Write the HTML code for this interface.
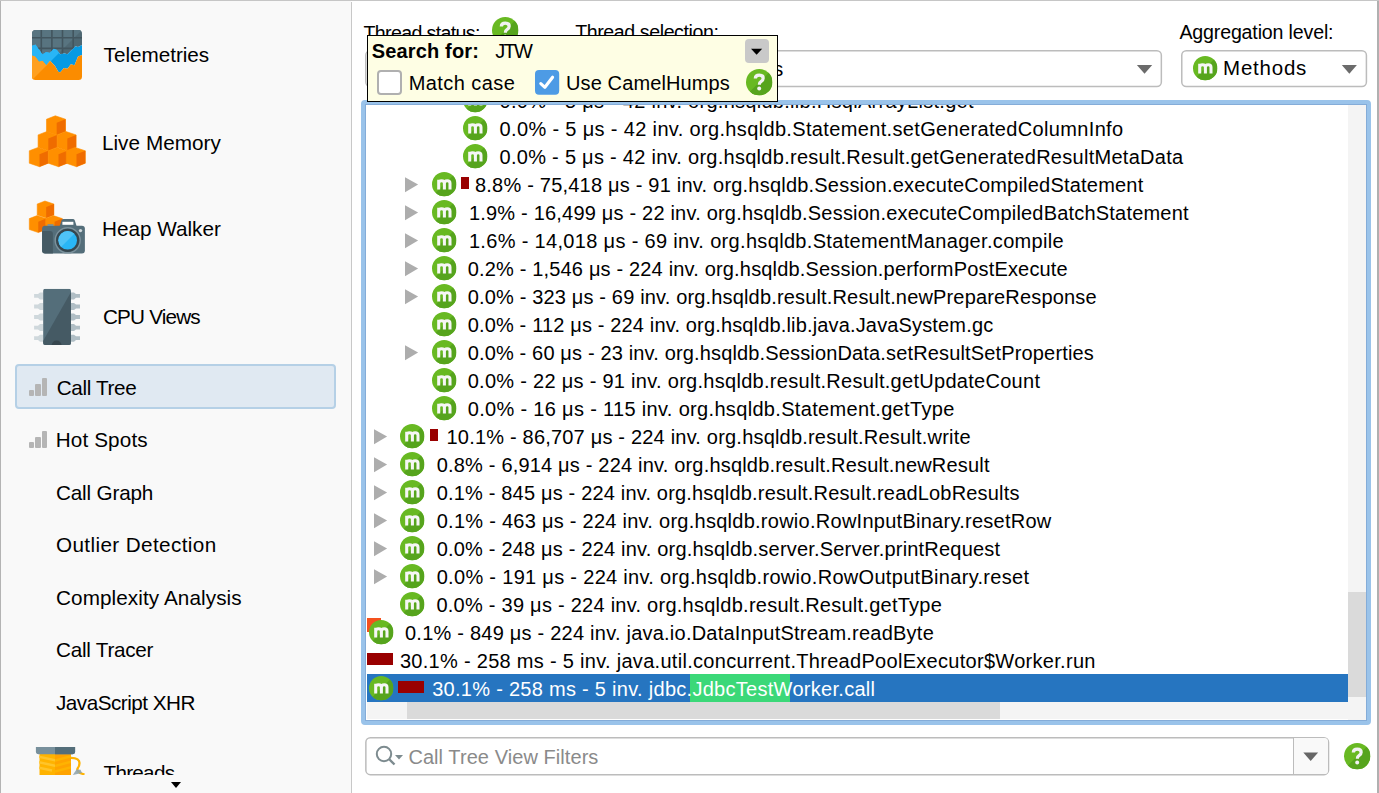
<!DOCTYPE html><html><head><meta charset="utf-8"><style>
*{margin:0;padding:0;box-sizing:border-box}
html,body{width:1379px;height:793px;overflow:hidden;background:#fff;font-family:"Liberation Sans",sans-serif;position:relative}
.a{position:absolute}
.t{position:absolute;white-space:pre}
.ic{position:absolute;overflow:visible}
.tri{position:absolute;width:0;height:0;border-top:7.8px solid transparent;border-bottom:7.8px solid transparent;border-left:13.8px solid #adadad}
.bar{position:absolute;background:#990000}
</style></head><body>
<svg width="0" height="0" style="position:absolute">
<defs>
<clipPath id="cc"><circle cx="12" cy="12" r="12"/></clipPath>
<clipPath id="cc2"><circle cx="13" cy="13" r="13"/></clipPath>
<symbol id="mi" viewBox="0 0 24 24"><g clip-path="url(#cc)"><rect width="24" height="24" fill="#68b922"/><path d="M24 0L24 24L0 24Z" fill="#56a41d"/></g><path d="M6.6 17.2V7.6M6.6 11Q6.6 8.6 9.4 8.6Q12.2 8.6 12.2 11V17.2M12.2 11Q12.2 8.6 15 8.6Q17.7 8.6 17.7 11V17.2" stroke="#f6f6f6" stroke-width="3" fill="none"/></symbol>
<symbol id="hi" viewBox="0 0 26 26"><g clip-path="url(#cc2)"><rect width="26" height="26" fill="#68b922"/><path d="M26 0L26 26L0 26Z" fill="#56a41d"/></g><path d="M9.2 9.4Q9.2 6 13.1 6Q16.9 6 16.9 9.1Q16.9 10.9 15 12.1Q13.1 13.3 13.1 15.4" stroke="#f2f2f2" stroke-width="3.2" fill="none"/><circle cx="13" cy="19.3" r="1.95" fill="#f2f2f2"/></symbol>
</defs></svg>

<div class="a" style="left:0;top:0;width:1379px;height:1px;background:#c6c6c6"></div>
<div class="a" style="left:0;top:1px;width:1px;height:792px;background:#b4b4b4"></div>
<div class="a" style="left:1px;top:1px;width:350px;height:792px;background:#f9f9f9"></div>
<div class="a" style="left:351px;top:2px;width:1px;height:791px;background:#c8c8c8"></div>
<div class="a" style="left:1377px;top:1px;width:2px;height:792px;background:#b0b0b0"></div>
<svg class="ic" style="left:32px;top:30px;width:50px;height:50px" viewBox="0 0 50 50">
<defs><clipPath id="tc"><rect x="0" y="0" width="50" height="50" rx="3.5"/></clipPath><clipPath id="tul"><path d="M0 0H50L0 50Z"/></clipPath><clipPath id="tsl"><path d="M0 0L50 0L50 14.9L46 17L43.4 16.2L35.4 24.2L31.9 23.3L28.3 24.2L24.8 19.7L21.7 18.4L17.7 22.8L14.2 22L10.6 24.2L3.5 14.4L0 15.8Z"/></clipPath></defs>
<g clip-path="url(#tc)">
<path d="M0 0L50 0L50 14.9L46 17L43.4 16.2L35.4 24.2L31.9 23.3L28.3 24.2L24.8 19.7L21.7 18.4L17.7 22.8L14.2 22L10.6 24.2L3.5 14.4L0 15.8Z" fill="#4f6873"/><path d="M0 15.8L3.5 14.4L10.6 24.2L14.2 22L17.7 22.8L21.7 18.4L24.8 19.7L28.3 24.2L31.9 23.3L35.4 24.2L43.4 16.2L46 17L50 14.9L50 25L46 26.4L42.5 35.2L38.9 34.3L35.4 38.8L31.9 37.9L28.3 42.3L26.5 41.9L23 36.1L18.1 30.8L14.2 35.2L10.6 30.8L7.1 31.7L3.1 26.4L0 25.5Z" fill="#069ae3"/><path d="M0 25.5L3.1 26.4L7.1 31.7L10.6 30.8L14.2 35.2L18.1 30.8L23 36.1L26.5 41.9L28.3 42.3L31.9 37.9L35.4 38.8L38.9 34.3L42.5 35.2L46 26.4L50 25L50 50L0 50Z" fill="#fb8c00"/>
<g clip-path="url(#tul)"><path d="M0 0L50 0L50 14.9L46 17L43.4 16.2L35.4 24.2L31.9 23.3L28.3 24.2L24.8 19.7L21.7 18.4L17.7 22.8L14.2 22L10.6 24.2L3.5 14.4L0 15.8Z" fill="#587480"/><path d="M0 15.8L3.5 14.4L10.6 24.2L14.2 22L17.7 22.8L21.7 18.4L24.8 19.7L28.3 24.2L31.9 23.3L35.4 24.2L43.4 16.2L46 17L50 14.9L50 25L46 26.4L42.5 35.2L38.9 34.3L35.4 38.8L31.9 37.9L28.3 42.3L26.5 41.9L23 36.1L18.1 30.8L14.2 35.2L10.6 30.8L7.1 31.7L3.1 26.4L0 25.5Z" fill="#29b6f6"/><path d="M0 25.5L3.1 26.4L7.1 31.7L10.6 30.8L14.2 35.2L18.1 30.8L23 36.1L26.5 41.9L28.3 42.3L31.9 37.9L35.4 38.8L38.9 34.3L42.5 35.2L46 26.4L50 25L50 50L0 50Z" fill="#ffa020"/></g>
<g clip-path="url(#tsl)"><path d="M9.3 0V50M19.9 0V50M30.5 0V50M41.2 0V50M0 7.8H50M0 18.4H50" stroke="#42555e" stroke-width="1.6"/></g>
</g></svg>
<svg class="ic" style="left:29px;top:115px;width:58px;height:53px" viewBox="29 115 58 53">
<defs><g id="cube"><path d="M0 3.4L8.8 0L19 3.4V15.8L10.2 19.3L0 15.8Z" fill="#ff8f00" stroke="#ff8f00" stroke-width="0.6" stroke-linejoin="round"/><path d="M10.2 6.9L19 3.4V15.8L10.2 19.3Z" fill="#ef6c00"/></g></defs>
<use href="#cube" x="46.5" y="115.8"/>
<use href="#cube" x="38.1" y="131.5"/>
<use href="#cube" x="57.1" y="131.5"/>
<use href="#cube" x="29.3" y="147.4"/>
<use href="#cube" x="48.3" y="147.4"/>
<use href="#cube" x="66.3" y="147.4"/>
</svg>
<svg class="ic" style="left:29px;top:200px;width:58px;height:56px" viewBox="29 200 58 56">
<g transform="translate(37.2 201) scale(0.88)"><use href="#cube"/></g>
<g transform="translate(29.3 215.6) scale(0.88)"><use href="#cube"/></g>
<g transform="translate(45.6 215.6) scale(0.88)"><use href="#cube"/></g>
<rect x="42.1" y="225.8" width="42.8" height="27.8" rx="3" fill="#546e7a"/>
<path d="M42.1 231H50Q52.9 231 52.9 234V253.6H45.1A3 3 0 0 1 42.1 250.6Z" fill="#455a64"/>
<path d="M59.7 226L61.5 220.5Q62 219.1 63.5 219.1H72.8Q74.3 219.1 74.8 220.5L76.6 226Z" fill="#546e7a"/>
<rect x="62.4" y="221.8" width="11" height="3" fill="#fff"/>
<rect x="47.5" y="224.2" width="6" height="1.8" fill="#78909c"/>
<circle cx="67.7" cy="240.3" r="12.5" fill="none" stroke="#7b919c" stroke-width="1.4"/>
<circle cx="67.7" cy="240.3" r="11.6" fill="#37474f"/>
<circle cx="67.7" cy="240.3" r="9.3" fill="#29b6f6"/>
<path d="M61.1 246.9A9.3 9.3 0 0 1 74.3 233.7Z" fill="#4fc3f7"/>
<circle cx="80.5" cy="230.6" r="1.7" fill="#cfd8dc"/>
</svg>
<svg class="ic" style="left:33px;top:288px;width:48px;height:58px" viewBox="33 288 48 58">
<g fill="#cfd8dc">
<path d="M34.1 294H38L40 292.4H43.2V299.4H40L38 297.8H34.1Z"/>
<path d="M34.1 304.6H38L40 303H43.2V310H40L38 308.4H34.1Z"/>
<path d="M34.1 315.1H38L40 313.5H43.2V320.5H40L38 318.9H34.1Z"/>
<path d="M34.1 325.7H38L40 324.1H43.2V331.1H40L38 329.5H34.1Z"/>
<path d="M34.1 336.3H38L40 334.7H43.2V341.7H40L38 340.1H34.1Z"/>
</g>
<g fill="#b0bec5">
<path d="M80 294H76L74 292.4H70.9V299.4H74L76 297.8H80Z"/>
<path d="M80 304.6H76L74 303H70.9V310H74L76 308.4H80Z"/>
<path d="M80 315.1H76L74 313.5H70.9V320.5H74L76 318.9H80Z"/>
<path d="M80 325.7H76L74 324.1H70.9V331.1H74L76 329.5H80Z"/>
<path d="M80 336.3H76L74 334.7H70.9V341.7H74L76 340.1H80Z"/>
</g>
<defs><clipPath id="chc"><rect x="43.1" y="288.8" width="27.9" height="56.1" rx="2"/></clipPath></defs>
<g clip-path="url(#chc)">
<rect x="43.1" y="288.8" width="27.9" height="56.1" fill="#546e7a"/>
<path d="M71 292L71 345L43.1 345L43.1 341Z" fill="#455a64"/>
<circle cx="56.6" cy="345.5" r="5" fill="#37474f"/>
</g>
</svg>
<div class="a" style="left:0;top:0;width:351px;height:775px;overflow:hidden">
<svg class="ic" style="left:35px;top:746px;width:52px;height:32px" viewBox="35 746 52 32">
<defs><clipPath id="spl"><rect x="39.3" y="754" width="15.7" height="24"/></clipPath><clipPath id="spr"><rect x="55" y="754" width="16.1" height="24"/></clipPath></defs>
<g clip-path="url(#spl)"><rect x="39.3" y="754" width="15.7" height="24" fill="#ffb300"/>
<path d="M38 756.5L56 760.5M38 762L56 766M38 767.5L52 770.5" stroke="#ffc42a" stroke-width="2.6"/></g>
<g clip-path="url(#spr)"><rect x="55" y="754" width="16.1" height="24" fill="#ffa300"/>
<path d="M55 760.5L72 756M55 766L72 761.5M55 771.5L72 767" stroke="#ffb300" stroke-width="2.6"/></g>
<path d="M71 757.8Q79.5 758 79.5 763Q79.5 766 77.6 768.5Q76.5 771 80 773L84.5 774.5" stroke="#ffb300" stroke-width="2.3" fill="none"/>
<path d="M72.8 775L76.5 769.5L80.5 769.8L82 773Z" fill="#90a4ae" opacity="0.9"/>
<path d="M35.9 747H75.1V751.5Q75.1 754.2 72.4 754.2H38.6Q35.9 754.2 35.9 751.5Z" fill="#78909c"/>
<path d="M55 747H75.1V751.5Q75.1 754.2 72.4 754.2H55Z" fill="#546e7a"/>
</svg>
</div>

<div class="a" style="left:15px;top:364px;width:321px;height:45px;background:#e0e9f2;border:2px solid #b5d0e6;border-radius:4px"></div>
<div class="a" style="left:28.8px;top:389.8px;width:5.5px;height:6px;background:#b5b5b5;border-radius:1px"></div><div class="a" style="left:35.4px;top:384.40000000000003px;width:5.5px;height:11.4px;background:#b5b5b5;border-radius:1px"></div><div class="a" style="left:42.1px;top:378.2px;width:5.2px;height:17.6px;background:#b5b5b5;border-radius:1px"></div>
<div class="a" style="left:28.8px;top:442.4px;width:5.5px;height:6px;background:#b5b5b5;border-radius:1px"></div><div class="a" style="left:35.4px;top:437.0px;width:5.5px;height:11.4px;background:#b5b5b5;border-radius:1px"></div><div class="a" style="left:42.1px;top:430.79999999999995px;width:5.2px;height:17.6px;background:#b5b5b5;border-radius:1px"></div>
<svg class="ic" style="left:364.5px;top:49.8px;width:200.0px;height:37.2px" viewBox="0 0 200.0 37.2"><rect x="0.75" y="0.75" width="198.50" height="35.70" rx="4.5" fill="#fff" stroke="#bcbcbc" stroke-width="1.5"/></svg>
<svg class="ic" style="left:575px;top:49.8px;width:587.2px;height:37.2px" viewBox="0 0 587.2 37.2"><rect x="0.75" y="0.75" width="585.70" height="35.70" rx="4.5" fill="#fff" stroke="#bcbcbc" stroke-width="1.5"/></svg>
<svg class="ic" style="left:1136px;top:64px;width:18px;height:11px" viewBox="0 0 18 11"><path d="M0.9 1H16.2L8.55 9.7Z" fill="#6b6b6b"/></svg>
<svg class="ic" style="left:1180.8px;top:49.8px;width:186.20000000000005px;height:37.2px" viewBox="0 0 186.20000000000005 37.2"><rect x="0.75" y="0.75" width="184.70" height="35.70" rx="4.5" fill="#fff" stroke="#bcbcbc" stroke-width="1.5"/></svg>
<svg class="ic" style="left:1341px;top:64px;width:18px;height:11px" viewBox="0 0 18 11"><path d="M0.8 1.1H15.9L8.35 9.8Z" fill="#6b6b6b"/></svg>
<svg class="ic" style="left:1192.60px;top:56.30px;width:24.4px;height:24.4px" viewBox="0 0 24 24"><use href="#mi"/></svg>
<svg class="ic" style="left:491.80px;top:16.80px;width:26.4px;height:26.4px" viewBox="0 0 26 26"><use href="#hi"/></svg>
<div class="a" style="left:361px;top:100px;width:1010px;height:625px;border:5px solid #9ac3ea;border-radius:4px;background:#fff"></div>
<div class="a" style="left:365px;top:104px;width:1002px;height:617px;border:1px solid #84acd8"></div>
<div class="a" style="left:366px;top:105px;width:1000px;height:615px;overflow:hidden">
<div class="a" style="left:982px;top:0;width:18px;height:615px;background:#f4f4f4"></div>
<div class="a" style="left:982px;top:487px;width:18px;height:105px;background:#dadada"></div>
<div class="a" style="left:1px;top:597px;width:999px;height:17px;background:#f4f4f4"></div>
<div class="a" style="left:41px;top:597px;width:593px;height:17px;background:#dadada"></div>
<svg class="ic" style="left:97.00px;top:-17.20px;width:24.4px;height:24.4px" viewBox="0 0 24 24"><use href="#mi"/></svg>
<div class="t" id="t22" style="left:133.60px;top:-15.93px;font-size:20px;line-height:24px;color:#000;letter-spacing:0.279px">0.0% - 5 μs - 42 inv. org.hsqldb.lib.HsqlArrayList.get</div>
<svg class="ic" style="left:97.00px;top:10.80px;width:24.4px;height:24.4px" viewBox="0 0 24 24"><use href="#mi"/></svg>
<div class="t" id="t23" style="left:133.60px;top:12.07px;font-size:20px;line-height:24px;color:#000;letter-spacing:0.345px">0.0% - 5 μs - 42 inv. org.hsqldb.Statement.setGeneratedColumnInfo</div>
<svg class="ic" style="left:97.00px;top:38.80px;width:24.4px;height:24.4px" viewBox="0 0 24 24"><use href="#mi"/></svg>
<div class="t" id="t24" style="left:133.60px;top:40.07px;font-size:20px;line-height:24px;color:#000;letter-spacing:0.275px">0.0% - 5 μs - 42 inv. org.hsqldb.result.Result.getGeneratedResultMetaData</div>
<svg class="ic" style="left:39.10px;top:72px;width:14px;height:16px" viewBox="0 0 14 16"><path d="M0 0.2L13.1 7.6L0 15.3Z" fill="#adadad"/></svg>
<svg class="ic" style="left:65.50px;top:66.80px;width:24.4px;height:24.4px" viewBox="0 0 24 24"><use href="#mi"/></svg>
<div class="bar" style="left:95.2px;top:72px;width:8px;height:12px"></div>
<div class="t" id="t25" style="left:109.00px;top:68.07px;font-size:20px;line-height:24px;color:#000;letter-spacing:0.210px">8.8% - 75,418 μs - 91 inv. org.hsqldb.Session.executeCompiledStatement</div>
<svg class="ic" style="left:39.10px;top:100px;width:14px;height:16px" viewBox="0 0 14 16"><path d="M0 0.2L13.1 7.6L0 15.3Z" fill="#adadad"/></svg>
<svg class="ic" style="left:65.50px;top:94.80px;width:24.4px;height:24.4px" viewBox="0 0 24 24"><use href="#mi"/></svg>
<div class="t" id="t26" style="left:102.90px;top:96.07px;font-size:20px;line-height:24px;color:#000;letter-spacing:0.200px">1.9% - 16,499 μs - 22 inv. org.hsqldb.Session.executeCompiledBatchStatement</div>
<svg class="ic" style="left:39.10px;top:128px;width:14px;height:16px" viewBox="0 0 14 16"><path d="M0 0.2L13.1 7.6L0 15.3Z" fill="#adadad"/></svg>
<svg class="ic" style="left:65.50px;top:122.80px;width:24.4px;height:24.4px" viewBox="0 0 24 24"><use href="#mi"/></svg>
<div class="t" id="t27" style="left:102.90px;top:124.07px;font-size:20px;line-height:24px;color:#000;letter-spacing:0.328px">1.6% - 14,018 μs - 69 inv. org.hsqldb.StatementManager.compile</div>
<svg class="ic" style="left:39.10px;top:156px;width:14px;height:16px" viewBox="0 0 14 16"><path d="M0 0.2L13.1 7.6L0 15.3Z" fill="#adadad"/></svg>
<svg class="ic" style="left:65.50px;top:150.80px;width:24.4px;height:24.4px" viewBox="0 0 24 24"><use href="#mi"/></svg>
<div class="t" id="t28" style="left:101.70px;top:152.07px;font-size:20px;line-height:24px;color:#000;letter-spacing:0.171px">0.2% - 1,546 μs - 224 inv. org.hsqldb.Session.performPostExecute</div>
<svg class="ic" style="left:39.10px;top:184px;width:14px;height:16px" viewBox="0 0 14 16"><path d="M0 0.2L13.1 7.6L0 15.3Z" fill="#adadad"/></svg>
<svg class="ic" style="left:65.50px;top:178.80px;width:24.4px;height:24.4px" viewBox="0 0 24 24"><use href="#mi"/></svg>
<div class="t" id="t29" style="left:101.70px;top:180.07px;font-size:20px;line-height:24px;color:#000;letter-spacing:0.162px">0.0% - 323 μs - 69 inv. org.hsqldb.result.Result.newPrepareResponse</div>
<svg class="ic" style="left:65.50px;top:206.80px;width:24.4px;height:24.4px" viewBox="0 0 24 24"><use href="#mi"/></svg>
<div class="t" id="t30" style="left:101.70px;top:208.07px;font-size:20px;line-height:24px;color:#000;letter-spacing:0.156px">0.0% - 112 μs - 224 inv. org.hsqldb.lib.java.JavaSystem.gc</div>
<svg class="ic" style="left:39.10px;top:240px;width:14px;height:16px" viewBox="0 0 14 16"><path d="M0 0.2L13.1 7.6L0 15.3Z" fill="#adadad"/></svg>
<svg class="ic" style="left:65.50px;top:234.80px;width:24.4px;height:24.4px" viewBox="0 0 24 24"><use href="#mi"/></svg>
<div class="t" id="t31" style="left:101.70px;top:236.07px;font-size:20px;line-height:24px;color:#000;letter-spacing:0.152px">0.0% - 60 μs - 23 inv. org.hsqldb.SessionData.setResultSetProperties</div>
<svg class="ic" style="left:65.50px;top:262.80px;width:24.4px;height:24.4px" viewBox="0 0 24 24"><use href="#mi"/></svg>
<div class="t" id="t32" style="left:101.70px;top:264.07px;font-size:20px;line-height:24px;color:#000;letter-spacing:0.287px">0.0% - 22 μs - 91 inv. org.hsqldb.result.Result.getUpdateCount</div>
<svg class="ic" style="left:65.50px;top:290.80px;width:24.4px;height:24.4px" viewBox="0 0 24 24"><use href="#mi"/></svg>
<div class="t" id="t33" style="left:101.70px;top:292.07px;font-size:20px;line-height:24px;color:#000;letter-spacing:0.327px">0.0% - 16 μs - 115 inv. org.hsqldb.Statement.getType</div>
<svg class="ic" style="left:8.06px;top:324px;width:14px;height:16px" viewBox="0 0 14 16"><path d="M0 0.2L13.1 7.6L0 15.3Z" fill="#adadad"/></svg>
<svg class="ic" style="left:34.00px;top:318.80px;width:24.4px;height:24.4px" viewBox="0 0 24 24"><use href="#mi"/></svg>
<div class="bar" style="left:63.7px;top:324px;width:8px;height:12px"></div>
<div class="t" id="t34" style="left:80.50px;top:320.07px;font-size:20px;line-height:24px;color:#000;letter-spacing:0.198px">10.1% - 86,707 μs - 224 inv. org.hsqldb.result.Result.write</div>
<svg class="ic" style="left:8.06px;top:352px;width:14px;height:16px" viewBox="0 0 14 16"><path d="M0 0.2L13.1 7.6L0 15.3Z" fill="#adadad"/></svg>
<svg class="ic" style="left:34.00px;top:346.80px;width:24.4px;height:24.4px" viewBox="0 0 24 24"><use href="#mi"/></svg>
<div class="t" id="t35" style="left:70.70px;top:348.07px;font-size:20px;line-height:24px;color:#000;letter-spacing:0.190px">0.8% - 6,914 μs - 224 inv. org.hsqldb.result.Result.newResult</div>
<svg class="ic" style="left:8.06px;top:380px;width:14px;height:16px" viewBox="0 0 14 16"><path d="M0 0.2L13.1 7.6L0 15.3Z" fill="#adadad"/></svg>
<svg class="ic" style="left:34.00px;top:374.80px;width:24.4px;height:24.4px" viewBox="0 0 24 24"><use href="#mi"/></svg>
<div class="t" id="t36" style="left:70.70px;top:376.07px;font-size:20px;line-height:24px;color:#000;letter-spacing:0.179px">0.1% - 845 μs - 224 inv. org.hsqldb.result.Result.readLobResults</div>
<svg class="ic" style="left:8.06px;top:408px;width:14px;height:16px" viewBox="0 0 14 16"><path d="M0 0.2L13.1 7.6L0 15.3Z" fill="#adadad"/></svg>
<svg class="ic" style="left:34.00px;top:402.80px;width:24.4px;height:24.4px" viewBox="0 0 24 24"><use href="#mi"/></svg>
<div class="t" id="t37" style="left:70.70px;top:404.07px;font-size:20px;line-height:24px;color:#000;letter-spacing:0.264px">0.1% - 463 μs - 224 inv. org.hsqldb.rowio.RowInputBinary.resetRow</div>
<svg class="ic" style="left:8.06px;top:436px;width:14px;height:16px" viewBox="0 0 14 16"><path d="M0 0.2L13.1 7.6L0 15.3Z" fill="#adadad"/></svg>
<svg class="ic" style="left:34.00px;top:430.80px;width:24.4px;height:24.4px" viewBox="0 0 24 24"><use href="#mi"/></svg>
<div class="t" id="t38" style="left:70.70px;top:432.07px;font-size:20px;line-height:24px;color:#000;letter-spacing:0.195px">0.0% - 248 μs - 224 inv. org.hsqldb.server.Server.printRequest</div>
<svg class="ic" style="left:8.06px;top:464px;width:14px;height:16px" viewBox="0 0 14 16"><path d="M0 0.2L13.1 7.6L0 15.3Z" fill="#adadad"/></svg>
<svg class="ic" style="left:34.00px;top:458.80px;width:24.4px;height:24.4px" viewBox="0 0 24 24"><use href="#mi"/></svg>
<div class="t" id="t39" style="left:70.70px;top:460.07px;font-size:20px;line-height:24px;color:#000;letter-spacing:0.308px">0.0% - 191 μs - 224 inv. org.hsqldb.rowio.RowOutputBinary.reset</div>
<svg class="ic" style="left:34.00px;top:486.80px;width:24.4px;height:24.4px" viewBox="0 0 24 24"><use href="#mi"/></svg>
<div class="t" id="t40" style="left:70.40px;top:488.07px;font-size:20px;line-height:24px;color:#000;letter-spacing:0.256px">0.0% - 39 μs - 224 inv. org.hsqldb.result.Result.getType</div>
<div class="a" style="left:1px;top:513px;width:14px;height:14px;background:#f4511e"></div>
<svg class="ic" style="left:2.50px;top:514.80px;width:24.4px;height:24.4px" viewBox="0 0 24 24"><use href="#mi"/></svg>
<div class="t" id="t41" style="left:39.00px;top:516.07px;font-size:20px;line-height:24px;color:#000;letter-spacing:0.230px">0.1% - 849 μs - 224 inv. java.io.DataInputStream.readByte</div>
<div class="bar" style="left:1px;top:548px;width:26px;height:12px"></div>
<div class="t" id="t42" style="left:33.90px;top:544.07px;font-size:20px;line-height:24px;color:#000;letter-spacing:0.295px">30.1% - 258 ms - 5 inv. java.util.concurrent.ThreadPoolExecutor$Worker.run</div>
<div class="a" style="left:1px;top:569px;width:981px;height:28px;background:#2675c0"></div>
<div class="a" style="left:324px;top:569px;width:100px;height:28px;background:#3bd878"></div>
<svg class="ic" style="left:2.50px;top:570.80px;width:24.4px;height:24.4px" viewBox="0 0 24 24"><use href="#mi"/></svg>
<div class="bar" style="left:32px;top:576px;width:26px;height:12px"></div>
<div class="t" id="t43" style="left:66.20px;top:572.07px;font-size:20px;line-height:24px;color:#fff;letter-spacing:0.285px">30.1% - 258 ms - 5 inv. jdbc.JdbcTestWorker.call</div>
</div>
<div class="t" id="t12" style="left:363.50px;top:20.71px;font-size:19.6px;line-height:24px;color:#000;letter-spacing:-0.638px">Thread status:</div>
<div class="t" id="t13" style="left:575.20px;top:20.21px;font-size:19.6px;line-height:24px;color:#000;letter-spacing:-0.413px">Thread selection:</div>
<div class="t" id="t16" style="left:655.00px;top:57.07px;font-size:20px;line-height:24px;color:#000;letter-spacing:-1.438px">All thread groups</div>
<div class="a" style="left:367px;top:35px;width:411px;height:67px;background:#fefee4;border:1px solid #000"></div>
<div class="a" style="left:745px;top:39.2px;width:24px;height:24px;background:#c9c9c9;border-radius:4px"></div>
<svg class="ic" style="left:750px;top:48px;width:14px;height:8px" viewBox="0 0 14 8"><path d="M1 0.7H12.2L6.6 6.8Z" fill="#000"/></svg>
<div class="a" style="left:377.2px;top:70.3px;width:24.6px;height:24.4px;background:#fff;border:2px solid #b0b0b0;border-radius:4px"></div>
<svg class="ic" style="left:535px;top:70.1px;width:24.2px;height:24.8px" viewBox="0 0 24.2 24.8"><rect width="24.2" height="24.8" rx="4" fill="#4d9be5"/><path d="M5.8 13.6L9.9 17.3L17.6 7.2" stroke="#fff" stroke-width="3.1" stroke-linecap="round" stroke-linejoin="round" fill="none"/></svg>
<svg class="ic" style="left:745.80px;top:69.20px;width:26.4px;height:26.4px" viewBox="0 0 26 26"><use href="#hi"/></svg>
<svg class="ic" style="left:364.8px;top:736.8px;width:964.4000000000001px;height:38.40000000000009px" viewBox="0 0 964.4000000000001 38.40000000000009"><rect x="0.75" y="0.75" width="962.90" height="36.90" rx="4.5" fill="#fff" stroke="#bcbcbc" stroke-width="1.5"/></svg>
<div class="a" style="left:1294px;top:738.3px;width:33.7px;height:35.4px;background:#f9f9f9;border-radius:0 3.5px 3.5px 0"></div>
<div class="a" style="left:1292.6px;top:737.5px;width:1.5px;height:37px;background:#bcbcbc"></div>
<svg class="ic" style="left:1303px;top:752px;width:16px;height:10px" viewBox="0 0 16 10"><path d="M0.3 0.6H15.1L7.7 9Z" fill="#666"/></svg>
<svg class="ic" style="left:372px;top:743px;width:34px;height:26px" viewBox="0 0 34 26"><circle cx="12" cy="11" r="7.2" stroke="#7d8b8f" stroke-width="2" fill="none"/><path d="M17 16L22.5 21.5" stroke="#7d8b8f" stroke-width="2.4"/><path d="M23 12L31 12L27 16.5Z" fill="#7d8b8f"/></svg>
<svg class="ic" style="left:1343.80px;top:742.80px;width:26.4px;height:26.4px" viewBox="0 0 26 26"><use href="#hi"/></svg>
<div class="t" id="t0" style="left:103.60px;top:42.83px;font-size:20.7px;line-height:24px;color:#000;letter-spacing:-0.020px">Telemetries</div>
<div class="t" id="t1" style="left:101.90px;top:130.83px;font-size:20.7px;line-height:24px;color:#000;letter-spacing:0.060px">Live Memory</div>
<div class="t" id="t2" style="left:102.00px;top:217.33px;font-size:20.7px;line-height:24px;color:#000;letter-spacing:0.000px">Heap Walker</div>
<div class="t" id="t3" style="left:103.00px;top:305.13px;font-size:20.7px;line-height:24px;color:#000;letter-spacing:-0.825px">CPU Views</div>
<div class="t" id="t4" style="left:56.70px;top:375.53px;font-size:20.7px;line-height:24px;color:#000;letter-spacing:-0.350px">Call Tree</div>
<div class="t" id="t5" style="left:55.70px;top:427.83px;font-size:20.7px;line-height:24px;color:#000;letter-spacing:0.138px">Hot Spots</div>
<div class="t" id="t6" style="left:56.00px;top:480.83px;font-size:20.7px;line-height:24px;color:#000;letter-spacing:-0.167px">Call Graph</div>
<div class="t" id="t7" style="left:56.00px;top:533.03px;font-size:20.7px;line-height:24px;color:#000;letter-spacing:0.381px">Outlier Detection</div>
<div class="t" id="t8" style="left:56.00px;top:585.83px;font-size:20.7px;line-height:24px;color:#000;letter-spacing:0.094px">Complexity Analysis</div>
<div class="t" id="t9" style="left:56.00px;top:638.33px;font-size:20.7px;line-height:24px;color:#000;letter-spacing:-0.250px">Call Tracer</div>
<div class="t" id="t10" style="left:56.00px;top:690.83px;font-size:20.7px;line-height:24px;color:#000;letter-spacing:-0.500px">JavaScript XHR</div>
<div class="a" style="left:0;top:0;width:351px;height:775px;overflow:hidden"><div class="t" id="t11" style="left:103.50px;top:760.83px;font-size:20.7px;line-height:24px;color:#000;letter-spacing:-0.733px">Threads</div></div>
<div class="t" id="t14" style="left:1179.40px;top:19.51px;font-size:19.6px;line-height:24px;color:#000;letter-spacing:-0.159px">Aggregation level:</div>
<div class="t" id="t15" style="left:1223.10px;top:56.30px;font-size:20.5px;line-height:24px;color:#000;letter-spacing:0.767px">Methods</div>
<div class="t" id="t17" style="left:371.80px;top:38.97px;font-size:20px;line-height:24px;color:#000;letter-spacing:0.150px;font-weight:bold">Search for:</div>
<div class="t" id="t18" style="left:495.30px;top:38.97px;font-size:20px;line-height:24px;color:#000;letter-spacing:-1.800px">JTW</div>
<div class="t" id="t19" style="left:408.70px;top:70.67px;font-size:20px;line-height:24px;color:#000;letter-spacing:0.433px">Match case</div>
<div class="t" id="t20" style="left:566.00px;top:70.67px;font-size:20px;line-height:24px;color:#000;letter-spacing:0.123px">Use CamelHumps</div>
<div class="t" id="t21" style="left:408.40px;top:745.27px;font-size:20px;line-height:24px;color:#8a8a8a;letter-spacing:0.067px">Call Tree View Filters</div>
<div class="a" style="left:171px;top:782px;width:0;height:0;border-left:5px solid transparent;border-right:5px solid transparent;border-top:6px solid #000"></div>
</body></html>
